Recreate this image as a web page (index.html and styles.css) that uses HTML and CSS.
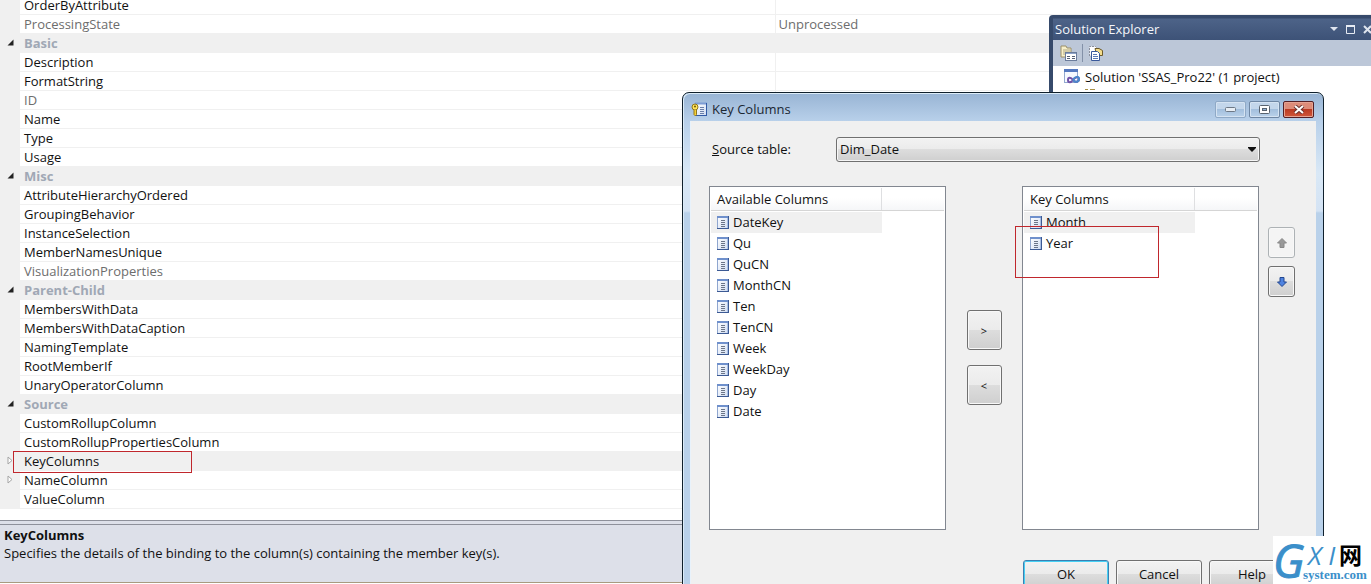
FILE: index.html
```
<!DOCTYPE html>
<html lang="en">
<head>
<meta charset="utf-8">
<title>Key Columns</title>
<link rel="stylesheet" href="styles.css">
</head>
<body>
<svg class="defs" aria-hidden="true">
  <defs>
    <linearGradient id="paper" x1="0" y1="0" x2="1" y2="1"><stop offset="0" stop-color="#fff"/><stop offset="1" stop-color="#cfdcf2"/></linearGradient>
    <symbol id="column" viewBox="0 0 12 13">
      <rect x=".5" y=".5" width="11" height="12" fill="url(#paper)" stroke="#8fa6cf"/>
      <path d="M0 1h12" stroke="#6f90cc" stroke-width="2"/>
      <path d="M11.500 0v13M0 12.500h12" stroke="#3c5a94"/>
      <path d="M10.500 2v10" stroke="#a9bfe4"/>
      <path d="M4 4.500h4M4 6.500h4M4 8.500h4M4 10.500h4" stroke="#6b7588"/>
    </symbol>
    <symbol id="open" viewBox="0 0 7 7"><path d="M6.500 .5v6h-6z" fill="#222"/></symbol>
    <symbol id="closed" viewBox="0 0 6 9"><path d="M1 1v7l4-3.500z" fill="#fff" stroke="#a5a5a5"/></symbol>
  </defs>
</svg>
<main class="desktop">
  <section class="properties">
    <table class="grid">
      <colgroup><col class="col-gutter"><col class="col-name"><col></colgroup>
      <tbody>
        <tr class="first"><td></td><th scope="row">OrderByAttribute</th><td></td></tr>
        <tr class="readonly"><td></td><th scope="row">ProcessingState</th><td>Unprocessed</td></tr>
        <tr class="category"><td><button class="toggle" aria-label="Collapse Basic"><svg width="7" height="7"><use href="#open"/></svg></button></td><th colspan="2">Basic</th></tr>
        <tr><td></td><th scope="row">Description</th><td></td></tr>
        <tr><td></td><th scope="row">FormatString</th><td></td></tr>
        <tr class="readonly"><td></td><th scope="row">ID</th><td></td></tr>
        <tr><td></td><th scope="row">Name</th><td></td></tr>
        <tr><td></td><th scope="row">Type</th><td></td></tr>
        <tr><td></td><th scope="row">Usage</th><td></td></tr>
        <tr class="category"><td><button class="toggle" aria-label="Collapse Misc"><svg width="7" height="7"><use href="#open"/></svg></button></td><th colspan="2">Misc</th></tr>
        <tr><td></td><th scope="row">AttributeHierarchyOrdered</th><td></td></tr>
        <tr><td></td><th scope="row">GroupingBehavior</th><td></td></tr>
        <tr><td></td><th scope="row">InstanceSelection</th><td></td></tr>
        <tr><td></td><th scope="row">MemberNamesUnique</th><td></td></tr>
        <tr class="readonly"><td></td><th scope="row">VisualizationProperties</th><td></td></tr>
        <tr class="category"><td><button class="toggle" aria-label="Collapse Parent-Child"><svg width="7" height="7"><use href="#open"/></svg></button></td><th colspan="2">Parent-Child</th></tr>
        <tr><td></td><th scope="row">MembersWithData</th><td></td></tr>
        <tr><td></td><th scope="row">MembersWithDataCaption</th><td></td></tr>
        <tr><td></td><th scope="row">NamingTemplate</th><td></td></tr>
        <tr><td></td><th scope="row">RootMemberIf</th><td></td></tr>
        <tr><td></td><th scope="row">UnaryOperatorColumn</th><td></td></tr>
        <tr class="category"><td><button class="toggle" aria-label="Collapse Source"><svg width="7" height="7"><use href="#open"/></svg></button></td><th colspan="2">Source</th></tr>
        <tr><td></td><th scope="row">CustomRollupColumn</th><td></td></tr>
        <tr><td></td><th scope="row">CustomRollupPropertiesColumn</th><td></td></tr>
        <tr class="selected"><td><button class="toggle" aria-label="Expand KeyColumns"><svg width="6" height="9"><use href="#closed"/></svg></button></td><th scope="row">KeyColumns</th><td></td></tr>
        <tr><td><button class="toggle" aria-label="Expand NameColumn"><svg width="6" height="9"><use href="#closed"/></svg></button></td><th scope="row">NameColumn</th><td></td></tr>
        <tr><td></td><th scope="row">ValueColumn</th><td></td></tr>
      </tbody>
    </table>
    <div class="splitter"></div>
    <div class="help-pane">
      <h2>KeyColumns</h2>
      <p>Specifies the details of the binding to the column(s) containing the member key(s).</p>
    </div>
  </section>
  <div class="mark mark-property"></div>

  <aside class="explorer">
    <header class="explorer-title">
      <h2>Solution Explorer</h2>
      <button aria-label="Window position"><svg width="8" height="4"><path d="M0 0h8l-4 4z" fill="#dfe5ef"/></svg></button>
      <button aria-label="Maximize"><svg width="9" height="9"><path d="M.5 1v7.500h8V1M0 1h9" fill="none" stroke="#e6ebf3"/><path d="M0 1h9" stroke="#e6ebf3" stroke-width="2"/></svg></button>
      <button aria-label="Close"><svg width="9" height="9"><path d="M1 1l7 7M8 1l-7 7" stroke="#dfe5ef" stroke-width="2"/></svg></button>
    </header>
    <div class="explorer-tools">
      <button aria-label="Properties"><svg width="17" height="16"><path d="M1 3V1h5l1 2h4v9H1z" fill="#f7efc9" stroke="#9b8f69"/><path d="M3 5h7M3 7h7M3 9h7" stroke="#b0a884"/><rect x="5.500" y="7.500" width="11" height="8" fill="#fff" stroke="#6b7c9b"/><path d="M6 8.500h10" stroke="#8ea4c8"/><path d="M7 11.500h3M7 13.500h3M12 11.500h3M12 13.500h3" stroke="#555f73"/></svg></button>
      <span class="divider"></span>
      <button aria-label="Show All Files"><svg width="16" height="16"><path d="M1.500 11V1.500h6L9 3v8z" fill="#fff" stroke="#8a8f9c" stroke-dasharray="2 1"/><path d="M7 3.500h4l3.500 2v5H9z" fill="#f4dd8c" stroke="#6d5a2a"/><path d="M3.500 6.500h6l2 2v7h-8z" fill="#fff" stroke="#39589a"/><path d="M5 9.500h4M5 11.500h5M5 13.500h5" stroke="#5a79b5"/></svg></button>
    </div>
    <ul class="tree">
      <li><svg width="16" height="16"><rect x=".5" y=".5" width="13" height="13" fill="#f6f9ff" stroke="#92a9cf"/><path d="M0 1.500h14" stroke="#5479c0" stroke-width="3"/><path d="M9 11c-2-3-5-3-5 0s3 3 5 0 6-4 6-1-4 4-6 1" fill="none" stroke="#7052a8" stroke-width="2"/><path d="M9 11c2-4 6-4 6-1s-4 4-6 1" fill="none" stroke="#4a88cc" stroke-width="2"/></svg>Solution 'SSAS_Pro22' (1 project)</li>
      <li class="child"><svg width="16" height="12"><path d="M0 1.500h3M5 1.500h5" stroke="#a89147"/></svg></li>
    </ul>
  </aside>

  <section class="dialog" role="dialog" aria-labelledby="dialog-title">
    <header class="titlebar">
      <svg width="16" height="15"><rect x="4.500" y="1.500" width="11" height="12" fill="url(#paper)" stroke="#6c8dc6"/><path d="M4 1.500h12" stroke="#7c9cd4" stroke-width="2"/><path d="M15.500 1v13M5 13.500h11" stroke="#315aa5"/><path d="M9 5.500h4M9 7.500h4M9 9.500h4M9 11.500h4" stroke="#6b80aa"/><circle cx="4" cy="5" r="3" fill="#ffe45a" stroke="#92771a"/><path d="M3 7.500v5l1.500 1.500 1-1.500V8" fill="#f4d037" stroke="#92771a"/><circle cx="4" cy="4.500" r="1" fill="#705500"/></svg>
      <h1 id="dialog-title">Key Columns</h1>
      <div class="window-buttons">
        <button aria-label="Minimize"><svg width="11" height="5"><rect x=".5" y=".5" width="10" height="4" rx="1" fill="#e8eef5" stroke="#6d7886"/></svg></button>
        <button aria-label="Maximize"><svg width="11" height="9"><rect x=".5" y=".5" width="10" height="8" rx="1" fill="#fff" stroke="#59636f"/><rect x="3.500" y="3.500" width="4" height="2" fill="#8fb0d5" stroke="#59636f"/></svg></button>
        <button class="close" aria-label="Close"><svg width="12" height="9"><path d="M2 1l8 7M10 1L2 8" stroke="#6c3430" stroke-width="4"/><path d="M2 1l8 7M10 1L2 8" stroke="#fff" stroke-width="2"/></svg></button>
      </div>
    </header>
    <form class="client">
      <div class="source">
        <label for="source-table"><u>S</u>ource table:</label>
        <div class="combo">
          <select id="source-table"><option>Dim_Date</option></select>
          <svg width="8" height="5"><path d="M0 0h8v1L4 5 0 1z" fill="#111"/></svg>
        </div>
      </div>
      <div class="pickers">
        <div class="list">
          <div class="list-head"><span>Available Columns</span></div>
          <ul>
            <li class="current"><svg width="12" height="13"><use href="#column"/></svg>DateKey</li>
            <li><svg width="12" height="13"><use href="#column"/></svg>Qu</li>
            <li><svg width="12" height="13"><use href="#column"/></svg>QuCN</li>
            <li><svg width="12" height="13"><use href="#column"/></svg>MonthCN</li>
            <li><svg width="12" height="13"><use href="#column"/></svg>Ten</li>
            <li><svg width="12" height="13"><use href="#column"/></svg>TenCN</li>
            <li><svg width="12" height="13"><use href="#column"/></svg>Week</li>
            <li><svg width="12" height="13"><use href="#column"/></svg>WeekDay</li>
            <li><svg width="12" height="13"><use href="#column"/></svg>Day</li>
            <li><svg width="12" height="13"><use href="#column"/></svg>Date</li>
          </ul>
        </div>
        <div class="movers">
          <button type="button" class="btn mover">&gt;</button>
          <button type="button" class="btn mover">&lt;</button>
        </div>
        <div class="list">
          <div class="list-head"><span>Key Columns</span></div>
          <ul>
            <li class="current"><svg width="12" height="13"><use href="#column"/></svg>Month</li>
            <li><svg width="12" height="13"><use href="#column"/></svg>Year</li>
          </ul>
        </div>
        <div class="sorters">
          <button type="button" class="btn" disabled aria-label="Move up"><svg width="10" height="10"><path d="M5 .5L9.500 5H7v4.500H3V5H.5z" fill="#999" stroke="#888"/></svg></button>
          <button type="button" class="btn" aria-label="Move down"><svg width="10" height="10"><path d="M5 9.500L9.500 5H7V.5H3V5H.5z" fill="#4f83e0" stroke="#23478f"/></svg></button>
        </div>
      </div>
      <div class="actions">
        <button type="button" class="btn default">OK</button>
        <button type="button" class="btn">Cancel</button>
        <button type="button" class="btn">Help</button>
      </div>
    </form>
  </section>
  <div class="mark mark-year"></div>

  <div class="watermark">
    <span class="wm-g">G</span>
    <span class="wm-xi">X I</span>
    <span class="wm-net" lang="zh">网</span>
    <span class="wm-site">system.com</span>
  </div>
</main>
</body>
</html>
```
FILE: styles.css
```
* { box-sizing: border-box; }
body {
  margin: 0;
  font: 13px/19px "Open Sans", "Noto Sans", sans-serif;
  color: #111;
  background: #fff;
}
h1, h2, p, ul { margin: 0; padding: 0; font-size: inherit; font-weight: normal; }
ul { list-style: none; }
svg { display: block; flex: none; }
button, select { font: inherit; color: inherit; }
.defs { position: absolute; width: 0; height: 0; }

.desktop { position: relative; height: 100vh; overflow: hidden; }

/* Property grid */
.properties { height: 100%; display: flex; flex-direction: column; }
.grid { width: 100%; margin-top: -3px; table-layout: fixed; border-collapse: collapse; flex: none; }
.col-gutter { width: 20px; }
.col-name { width: 755px; }
.grid tr { height: 19px; }
.grid td, .grid th {
  padding: 0 3px;
  height: 19px;
  line-height: 18px;
  text-align: left;
  font-weight: normal;
  border-bottom: 1px solid #f0f0f0;
}
.grid th { padding-left: 4px; border-right: 1px solid #f0f0f0; }
.grid td:first-child { padding: 0; background: #f0f0f0; }
.grid .first, .grid .first td, .grid .first th { height: 17px; line-height: 16px; }
.grid .readonly { color: #6d6d6d; }
.grid .category th { color: #a0a8b5; font-weight: bold; background: #f0f0f0; }
.grid .selected { background: #f0f0f0; }
.toggle {
  display: flex;
  align-items: center;
  justify-content: center;
  width: 20px;
  height: 18px;
  padding: 0;
  border: 0;
  background: none;
}
.splitter {
  flex: none;
  height: 5px;
  margin-top: 11px;
  background: #dde0e9;
  border: solid #8e919b;
  border-width: 1px 0;
}
.help-pane {
  flex: none;
  height: 58px;
  padding: 1px 4px;
  background: #dde0e9;
  border-bottom: 1px solid #a89b80;
}
.help-pane h2 { font-weight: bold; line-height: 18px; }
.help-pane p { line-height: 19px; }

/* Solution Explorer */
.explorer {
  position: absolute;
  top: 15px;
  right: -4px;
  bottom: 0;
  width: 326px;
  border-left: 4px solid #364a6b;
  border-radius: 4px 0 0 0;
  overflow: hidden;
  background: #fff;
}
.explorer-title {
  display: flex;
  align-items: center;
  gap: 8px;
  height: 25px;
  padding: 3px 3px 0 2px;
  color: #f4f6fa;
  background: linear-gradient(#364a6b 3px, #4d6388 4px, #3d5277);
}
.explorer-title h2 { flex: 1; }
.explorer-title button, .explorer-tools button { padding: 0; border: 0; background: none; }
.explorer-tools {
  display: flex;
  align-items: center;
  gap: 5px;
  height: 26px;
  padding: 0 7px;
  background: #bcc7d8;
}
.divider { width: 1px; height: 18px; background: #8391a8; }
.tree li { display: flex; align-items: center; gap: 5px; height: 22px; padding-left: 11px; }
.tree .child { padding-left: 32px; align-items: flex-start; }

/* Dialog */
.dialog {
  position: absolute;
  top: 92px;
  left: 682px;
  width: 642px;
  border: 1px solid #10202c;
  border-radius: 7px 7px 0 0;
  padding: 0 7px 6px;
  background: linear-gradient(#98b4d4, #b8d0ea 28px, #d9e8f6 80px, #d4e3f4 118px, #b9d1ea 120px);
  box-shadow: inset 1px 1px #dcecf8;
}
.titlebar { display: flex; align-items: center; gap: 5px; height: 28px; padding: 4px 0 0 1px; }
.titlebar h1 { flex: 1; color: #1b2733; }
.window-buttons { display: flex; gap: 3px; padding-right: 2px; }
.window-buttons button {
  display: flex;
  align-items: center;
  justify-content: center;
  width: 31px;
  height: 17px;
  padding: 0;
  border: 1px solid #6e86a3;
  border-radius: 2px;
  background: linear-gradient(#c3d6eb 50%, #a3bfdd 50%, #bad2ea);
  box-shadow: inset 0 0 0 1px #d5e3f2;
}
.window-buttons button:first-child { border-color: #8fa9c6; }
.window-buttons .close {
  border-color: #531f25;
  background: linear-gradient(#dd8c79 45%, #bb3b23 50%, #d0573b);
  box-shadow: inset 0 0 0 1px #e5a393;
}
.client {
  padding: 16px 21px 16px 18px;
  background: #f0f0f0;
  border-left: 1px solid #e8f2fb;
}
.source { display: flex; align-items: center; padding: 0 35px 0 3px; }
.source label { width: 124px; }
.combo { position: relative; flex: 1; }
.combo select {
  display: block;
  width: 100%;
  height: 25px;
  padding: 0 3px;
  appearance: none;
  border: 1px solid #707070;
  border-radius: 3px;
  background: linear-gradient(#f2f2f2, #ebebeb 50%, #dddddd 50%, #cfcfcf);
  box-shadow: inset 0 0 0 1px #f6f6f6;
}
.combo svg { position: absolute; top: 10px; right: 4px; pointer-events: none; }
.pickers {
  display: grid;
  grid-template-columns: 1fr 76px 1fr 36px;
  height: 344px;
  margin-top: 24px;
}
.list { padding: 1px; border: 1px solid #828790; background: #fff; }
.list-head {
  display: flex;
  height: 23px;
  background: linear-gradient(#fff 45%, #f5f6f8);
  border-bottom: 1px solid #d5d5d5;
}
.list-head span { width: 171px; padding: 2px 6px 0; border-right: 1px solid #dedfe1; }
.list ul { padding-top: 1px; }
.list li { display: flex; align-items: center; gap: 4px; width: 171px; height: 21px; padding-left: 6px; }
.list li.current { background: #f0f0f0; }
.btn {
  padding: 0;
  border: 1px solid #707070;
  border-radius: 3px;
  background: linear-gradient(#f2f2f2, #ebebeb 50%, #dddddd 50%, #cfcfcf);
  box-shadow: inset 0 0 0 1px #f8f8f8;
}
.btn:disabled { border-color: #adb2b5; background: #f4f4f4; }
.movers { display: flex; flex-direction: column; align-items: center; gap: 15px; padding-top: 124px; }
.mover { width: 35px; height: 40px; font-size: 11px; }
.sorters { display: flex; flex-direction: column; align-items: flex-end; gap: 8px; padding-top: 41px; }
.sorters .btn { display: flex; align-items: center; justify-content: center; width: 27px; height: 31px; }
.actions { display: flex; justify-content: flex-end; gap: 7px; margin-top: 30px; }
.actions .btn { width: 86px; height: 28px; }
.actions .default { border-color: #3c7fb1; box-shadow: inset 0 0 0 1px #46d0f4; }

/* Highlight boxes */
.mark { position: absolute; border: 1px solid #c0272d; }
.mark-property { top: 451px; left: 13px; width: 179px; height: 22px; }
.mark-year { top: 226px; left: 1015px; width: 144px; height: 52px; }

/* Site badge */
.watermark {
  position: absolute;
  right: 0;
  bottom: 0;
  display: grid;
  grid-template-columns: 30px 36px 1fr;
  grid-template-rows: 30px 18px;
  width: 98px;
  height: 48px;
  color: #3b8fca;
  background: #fff;
}
.wm-g { grid-row: 1 / 3; font: italic 46px/48px "Open Sans", sans-serif; -webkit-text-stroke: 1px #3b8fca; }
.wm-xi { padding-left: 5px; font: italic 26px/38px "Open Sans", sans-serif; white-space: nowrap; }
.wm-net { font: bold 23px/36px "Noto Sans CJK SC", sans-serif; color: #000; }
.wm-site { grid-column: 2 / 4; font: bold 13px/18px "Liberation Serif", serif; }
```
